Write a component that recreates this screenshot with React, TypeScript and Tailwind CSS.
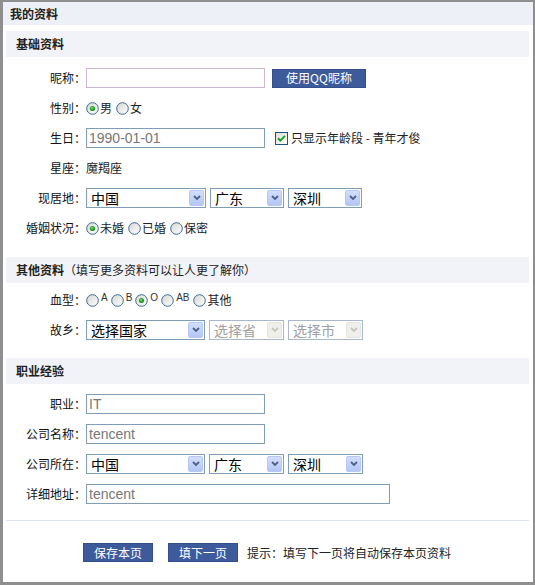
import type { ReactNode } from "react";

const cjk = "font-['Noto_Sans_CJK_SC','Noto_Sans_CJK_JP',sans-serif]";
const latin = "font-['Liberation_Sans','Noto_Sans_CJK_SC',sans-serif]";

function Radio({ checked }: { checked?: boolean }) {
  return (
    <svg width="13" height="13" viewBox="0 0 13 13" className="shrink-0">
      <defs>
        <linearGradient id="rfill" x1="0" y1="0" x2="1" y2="1">
          <stop offset="0" stopColor="#d6d6cf" />
          <stop offset="1" stopColor="#ffffff" />
        </linearGradient>
      </defs>
      <circle cx="6.5" cy="6.5" r="5.8" fill="url(#rfill)" stroke="#3e6895" strokeWidth="1" />
      {checked && (
        <>
          <circle cx="6.5" cy="6.5" r="2.6" fill="#2ca12c" />
          <circle cx="6" cy="6" r="1" fill="#7fd87f" />
        </>
      )}
    </svg>
  );
}

function Checkbox() {
  return (
    <svg width="13" height="13" viewBox="0 0 13 13" className="shrink-0">
      <defs>
        <linearGradient id="cfill" x1="0" y1="0" x2="1" y2="1">
          <stop offset="0" stopColor="#dcdcd6" />
          <stop offset="1" stopColor="#ffffff" />
        </linearGradient>
      </defs>
      <rect x="0.5" y="0.5" width="12" height="12" fill="url(#cfill)" stroke="#1c5180" />
      <path d="M3 6.2 L5.3 8.6 L10 3.9" fill="none" stroke="#21a121" strokeWidth="2" />
    </svg>
  );
}

function Select({ value, width, disabled }: { value: string; width: string; disabled?: boolean }) {
  return (
    <div
      className={`flex h-[20px] shrink-0 items-stretch border bg-white p-[1px] ${width} ${
        disabled ? "border-[#a9b8cc]" : "border-[#7f9db9]"
      }`}
    >
      <span
        className={`flex flex-1 items-center whitespace-nowrap pl-[3px] text-[14px] leading-none ${cjk} ${
          disabled ? "text-[#a0a0a0]" : "text-black"
        }`}
      >
        {value}
      </span>
      <span
        className={`flex w-[15px] items-center justify-center rounded-[2px] border ${
          disabled
            ? "border-[#e4e4e0] bg-[#efefec]"
            : "border-[#b6c8f3] bg-gradient-to-b from-[#d2defc] to-[#b3c6f5]"
        }`}
      >
        <svg width="8" height="6" viewBox="0 0 8 6">
          <path
            d="M1 1 L4 4 L7 1"
            fill="none"
            stroke={disabled ? "#c6c6c0" : "#4d6185"}
            strokeWidth="1.8"
          />
        </svg>
      </span>
    </div>
  );
}

function TextBox({ value, width, pink }: { value?: string; width: string; pink?: boolean }) {
  return (
    <div
      className={`flex h-[20px] shrink-0 items-center border bg-white pl-[2px] text-[14px] leading-none text-[#777] ${latin} ${width} ${
        pink ? "border-[#cdb8d2]" : "border-[#7f9db9]"
      }`}
    >
      {value}
    </div>
  );
}

function Row({ label, children }: { label: string; children?: ReactNode }) {
  return (
    <div className="flex h-[30px] items-center">
      <span className="w-[83px] shrink-0 text-right text-[#111]">{label}：</span>
      <div className="flex items-center">{children}</div>
    </div>
  );
}

function SectionBar({ children, className = "" }: { children: ReactNode; className?: string }) {
  return (
    <div className={`ml-[3px] mr-[4px] flex h-[26px] items-center bg-[#f1f3f8] pl-[10px] font-bold ${className}`}>
      {children}
    </div>
  );
}

function Opt({ label, checked, first }: { label: string; checked?: boolean; first?: boolean }) {
  return (
    <span className={`flex items-center ${first ? "" : "ml-[4px]"}`}>
      <Radio checked={checked} />
      <span className="ml-[1px]">{label}</span>
    </span>
  );
}

function Blood({ label, checked, first }: { label: string; checked?: boolean; first?: boolean }) {
  return (
    <span className={`flex items-center ${first ? "" : "ml-[3px]"}`}>
      <Radio checked={checked} />
      <span className={`mb-[5px] ml-[2px] text-[10px] leading-none text-[#333] ${latin}`}>{label}</span>
    </span>
  );
}

function BlueButton({ children, width }: { children: ReactNode; width: string }) {
  return (
    <button
      className={`flex h-[19px] shrink-0 items-center justify-center border border-[#34508c] bg-[#3d5b9a] text-[12px] leading-none text-white ${width}`}
    >
      {children}
    </button>
  );
}

export default function App() {
  return (
    <div
      className={`flex h-[585px] w-[535px] flex-col border-b-[3px] border-l-[3px] border-r-2 border-t-2 border-[#8f8f8f] bg-white text-[12px] text-[#222] ${cjk}`}
    >
      <div className="flex h-[23px] shrink-0 items-center bg-[#edf0f6] pl-[7px] font-bold">我的资料</div>

      <SectionBar className="mt-[6px]">基础资料</SectionBar>
      <div className="pb-[14px] pt-[6px]">
        <Row label="昵称">
          <TextBox width="w-[179px]" pink />
          <BlueButton width="w-[94px] ml-[7px]">使用QQ昵称</BlueButton>
        </Row>
        <Row label="性别">
          <Opt label="男" checked first />
          <Opt label="女" />
        </Row>
        <Row label="生日">
          <TextBox value="1990-01-01" width="w-[179px]" />
          <span className="ml-[10px] flex items-center">
            <Checkbox />
            <span className="ml-[3px]">只显示年龄段 - 青年才俊</span>
          </span>
        </Row>
        <Row label="星座">
          <span>魔羯座</span>
        </Row>
        <Row label="现居地">
          <div className="flex gap-[4px]">
            <Select value="中国" width="w-[120px]" />
            <Select value="广东" width="w-[74px]" />
            <Select value="深圳" width="w-[74px]" />
          </div>
        </Row>
        <Row label="婚姻状况">
          <Opt label="未婚" checked first />
          <Opt label="已婚" />
          <Opt label="保密" />
        </Row>
      </div>

      <SectionBar>
        其他资料<span className="font-normal">（填写更多资料可以让人更了解你）</span>
      </SectionBar>
      <div className="pb-[13px] pt-[2px]">
        <Row label="血型">
          <Blood label="A" first />
          <Blood label="B" />
          <Blood label="O" checked />
          <Blood label="AB" />
          <Opt label="其他" />
        </Row>
        <Row label="故乡">
          <div className="flex gap-[4px]">
            <Select value="选择国家" width="w-[119px]" />
            <Select value="选择省" width="w-[75px]" disabled />
            <Select value="选择市" width="w-[75px]" disabled />
          </div>
        </Row>
      </div>

      <SectionBar>职业经验</SectionBar>
      <div className="pb-[11px] pt-[5px]">
        <Row label="职业">
          <TextBox value="IT" width="w-[179px]" />
        </Row>
        <Row label="公司名称">
          <TextBox value="tencent" width="w-[179px]" />
        </Row>
        <Row label="公司所在">
          <div className="flex gap-[4px]">
            <Select value="中国" width="w-[119px]" />
            <Select value="广东" width="w-[75px]" />
            <Select value="深圳" width="w-[75px]" />
          </div>
        </Row>
        <Row label="详细地址">
          <TextBox value="tencent" width="w-[304px]" />
        </Row>
      </div>

      <div className="ml-[3px] mr-[4px] h-px shrink-0 bg-[#dce4ef]" />

      <div className="flex items-center pl-[80px] pt-[22px]">
        <BlueButton width="w-[70px]">保存本页</BlueButton>
        <BlueButton width="w-[70px] ml-[15px]">填下一页</BlueButton>
        <span className="ml-[9px]">提示：填写下一页将自动保存本页资料</span>
      </div>
    </div>
  );
}
